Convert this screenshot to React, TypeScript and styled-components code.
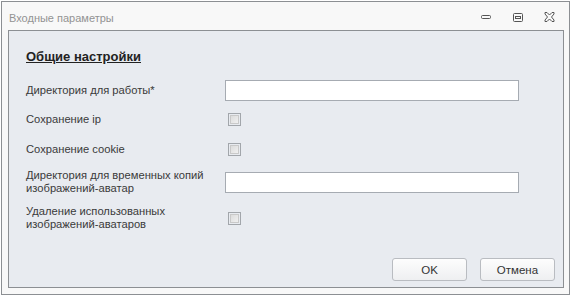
import * as React from "react";
import styled, { createGlobalStyle } from "styled-components";

const borderGrey = "#8c8f93";
const panelBg = "#e8ebf0";
const labelColor = "#3a3a3a";
const fieldBorder = "#a6abb2";

const GlobalStyle = createGlobalStyle`
  html, body {
    margin: 0;
    padding: 0;
    background: #ffffff;
  }
  body {
    font-family: "Liberation Sans", Arial, sans-serif;
    font-size: 11.2px;
  }
`;

const Window = styled.div`
  box-sizing: border-box;
  margin: 1px 0 0 1px;
  width: 569px;
  height: 294px;
  border: 1px solid ${borderGrey};
  background: #f8f8f8;
  display: flex;
  flex-direction: column;
  padding: 0 5px 6px 6px;
`;

const TitleBar = styled.div`
  height: 28px;
  display: flex;
  align-items: center;
  justify-content: space-between;
`;

const Title = styled.div`
  color: #939393;
  font-size: 11px;
  padding: 3px 0 0 1px;
`;

const TitleButtons = styled.div`
  display: flex;
  align-items: center;
  gap: 21px;
  padding: 2px 9px 0 0;
`;

const Panel = styled.div`
  flex: 1;
  display: flex;
  flex-direction: column;
  border: 1px solid ${borderGrey};
  background: ${panelBg};
  padding: 18px 8px 6px 17px;
`;

const Heading = styled.div`
  font-weight: bold;
  font-size: 13px;
  line-height: 16px;
  color: #222;
  text-decoration: underline;
  margin-bottom: 14px;
`;

const Rows = styled.div`
  display: flex;
  flex-direction: column;
  gap: 7px;
`;

const Row = styled.div<{ h: number }>`
  display: grid;
  grid-template-columns: 199px 294px;
  align-items: center;
  height: ${(p) => p.h}px;
`;

const Label = styled.div`
  color: ${labelColor};
  line-height: 13px;
  white-space: nowrap;
`;

const TextField = styled.input`
  box-sizing: border-box;
  width: 294px;
  height: 21px;
  border: 1px solid ${fieldBorder};
  background: #fff;
  outline: none;
  margin: 0;
`;

const Check = styled.span`
  box-sizing: border-box;
  display: block;
  width: 13px;
  height: 13px;
  margin-left: 3px;
  border: 1px solid #a2a6ab;
  padding: 1px;
  &::after {
    content: "";
    display: block;
    box-sizing: border-box;
    width: 9px;
    height: 9px;
    border: 1px solid #c9c9c9;
    background: linear-gradient(135deg, #dcdcdc, #f0f0f0);
  }
`;

const Footer = styled.div`
  margin-top: auto;
  display: flex;
  justify-content: flex-end;
  gap: 13px;
`;

const Button = styled.button`
  box-sizing: border-box;
  width: 75px;
  height: 23px;
  border: 1px solid #b9bcc1;
  border-radius: 3px;
  background: linear-gradient(#fdfdfd, #eeeff1);
  font-family: inherit;
  font-size: 11.5px;
  color: #333;
  padding: 0;
`;

const fields: { label: React.ReactNode; kind: "text" | "check"; h: number }[] = [
  { label: "Директория для работы*", kind: "text", h: 22 },
  { label: "Сохранение ip", kind: "check", h: 23 },
  { label: "Сохранение cookie", kind: "check", h: 23 },
  {
    label: (
      <>
        Директория для временных копий
        <br />
        изображений-аватар
      </>
    ),
    kind: "text",
    h: 28,
  },
  {
    label: (
      <>
        Удаление использованных
        <br />
        изображений-аватаров
      </>
    ),
    kind: "check",
    h: 30,
  },
];

const MinIcon = () => (
  <svg width="11" height="5" viewBox="0 0 11 5">
    <rect x="0.5" y="0.5" width="9" height="3" rx="1" fill="none" stroke="#555" />
  </svg>
);

const RestoreIcon = () => (
  <svg width="10" height="9" viewBox="0 0 10 9">
    <rect x="0.5" y="0.5" width="9" height="8" rx="1" fill="none" stroke="#555" />
    <rect x="2.5" y="3.5" width="5" height="2" fill="none" stroke="#555" />
  </svg>
);

const CloseIcon = () => (
  <svg width="11" height="10" viewBox="0 0 11 10">
    <path
      d="M1 0.5 L3 0.5 L5.5 3 L8 0.5 L10 0.5 L10 2 L7.5 5 L10 8 L10 9.5 L8 9.5 L5.5 7 L3 9.5 L1 9.5 L1 8 L3.5 5 L1 2 Z"
      fill="none"
      stroke="#555"
      strokeWidth="1"
    />
  </svg>
);

export default function App() {
  return (
    <>
      <GlobalStyle />
      <Window>
        <TitleBar>
          <Title>Входные параметры</Title>
          <TitleButtons>
            <MinIcon />
            <RestoreIcon />
            <CloseIcon />
          </TitleButtons>
        </TitleBar>
        <Panel>
          <Heading>Общие настройки</Heading>
          <Rows>
            {fields.map((f, i) => (
              <Row key={i} h={f.h}>
                <Label>{f.label}</Label>
                {f.kind === "text" ? <TextField /> : <Check />}
              </Row>
            ))}
          </Rows>
          <Footer>
            <Button>OK</Button>
            <Button>Отмена</Button>
          </Footer>
        </Panel>
      </Window>
    </>
  );
}
